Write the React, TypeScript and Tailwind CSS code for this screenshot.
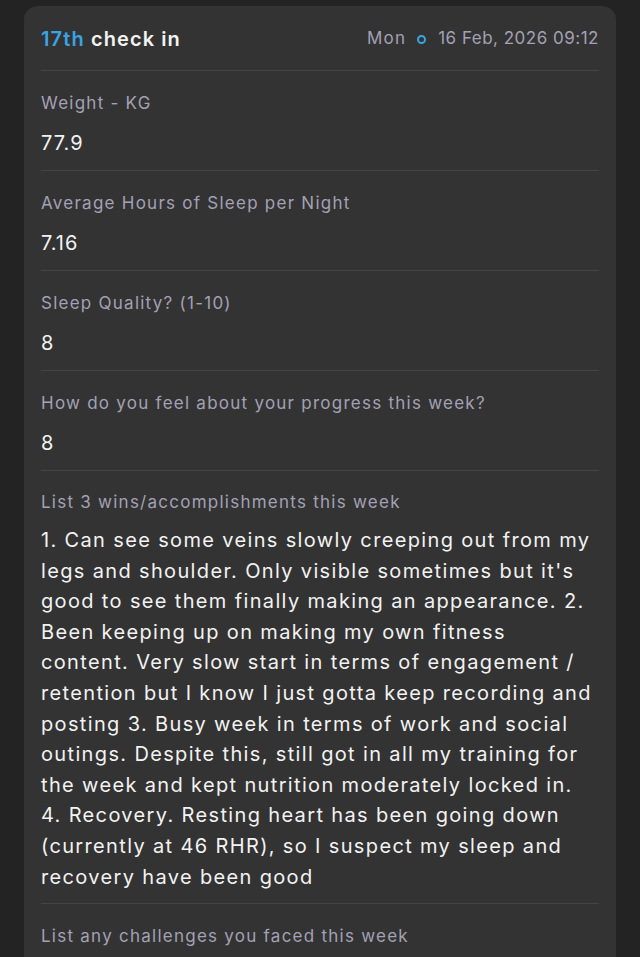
import React from "react";

const lines = [
  "1. Can see some veins slowly creeping out from my",
  "legs and shoulder. Only visible sometimes but it's",
  "good to see them finally making an appearance. 2.",
  "Been keeping up on making my own fitness",
  "content. Very slow start in terms of engagement /",
  "retention but I know I just gotta keep recording and",
  "posting 3. Busy week in terms of work and social",
  "outings. Despite this, still got in all my training for",
  "the week and kept nutrition moderately locked in.",
  "4. Recovery. Resting heart has been going down",
  "(currently at 46 RHR), so I suspect my sleep and",
  "recovery have been good",
];

function Field({ label, value }: { label: string; value: string }) {
  return (
    <div className="border-b border-[#444444] h-[100px] flex flex-col">
      <div className="text-[17px] text-[#a3a1b3] leading-[24px] mt-[20px] tracking-[1.25px]">{label}</div>
      <div className="text-[20px] text-[#f2f2f2] leading-[28px] mt-[14px] tracking-[1px]">{value}</div>
    </div>
  );
}

export default function App() {
  return (
    <div className="w-[640px] h-[957px] bg-[#232323] overflow-hidden pt-[6px] px-[24px]" style={{ fontFamily: "Inter, 'Liberation Sans', sans-serif" }}>
      <div className="bg-[#333333] rounded-t-[14px] px-[17px] h-[1000px]">
        <div className="h-[65px] border-b border-[#444444] flex items-center justify-between pt-[2px]">
          <div className="text-[20px] font-semibold tracking-[1.1px]">
            <span className="text-[#3aa3e3]">17th</span>{" "}
            <span className="text-[#f2f2f2]">check in</span>
          </div>
          <div className="flex items-center text-[17px] text-[#a3a1b3]">
            <span className="tracking-[1.2px]">Mon</span>
            <span className="inline-block w-[9px] h-[9px] rounded-full border-[2px] border-[#3aa3e3] ml-[11px] mr-[12px]" />
            <span className="tracking-[0.5px]">16 Feb, 2026 09:12</span>
          </div>
        </div>
        <Field label="Weight - KG" value="77.9" />
        <Field label="Average Hours of Sleep per Night" value="7.16" />
        <Field label="Sleep Quality? (1-10)" value="8" />
        <Field label="How do you feel about your progress this week?" value="8" />
        <div className="border-b border-[#444444] pb-[11px]">
          <div className="text-[17px] text-[#a3a1b3] leading-[24px] mt-[19px] tracking-[1.25px]">List 3 wins/accomplishments this week</div>
          <div className="text-[20px] text-[#f2f2f2] leading-[30.6px] mt-[11px] tracking-[1.35px]">
            {lines.map((l, i) => (
              <div key={i} className="whitespace-nowrap">{l}</div>
            ))}
          </div>
        </div>
        <div className="text-[17px] text-[#a3a1b3] leading-[24px] mt-[20px] tracking-[1.25px]">List any challenges you faced this week</div>
      </div>
    </div>
  );
}
